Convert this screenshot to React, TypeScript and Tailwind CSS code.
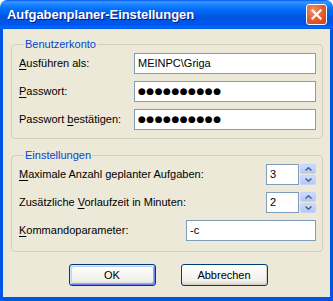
import React from "react";

const font = "font-['Liberation_Sans',Tahoma,sans-serif]";

const U = ({ children }: { children: React.ReactNode }) => (
  <span className="underline underline-offset-[2px]">{children}</span>
);

const TextBox = ({ value, className = "" }: { value: React.ReactNode; className?: string }) => (
  <div
    className={`h-[21px] border border-[#7f9db9] bg-white flex items-center pl-[3px] text-[11px] text-black ${className}`}
  >
    {value}
  </div>
);

const Dots = () => (
  <span className="font-['DejaVu_Sans',sans-serif] text-[9px] tracking-[0.5px] leading-none">
    ●●●●●●●●●●
  </span>
);

const Spin = ({ value }: { value: string }) => (
  <div className="flex items-center gap-[1px]">
    <TextBox value={value} className="w-[33px]" />
    <div className="flex flex-col gap-[1px] w-[16px] h-[21px]">
      {["up", "down"].map((d) => (
        <div
          key={d}
          className="flex-1 rounded-[2px] bg-[linear-gradient(to_bottom,#cddcfc,#b4c8f6)] border border-[#c3d3fd] flex items-center justify-center"
        >
          <svg width="7" height="4" viewBox="0 0 7 4">
            {d === "up" ? (
              <path d="M0.5 3.5 L3.5 0.8 L6.5 3.5" fill="none" stroke="#4d6185" strokeWidth="1.5" />
            ) : (
              <path d="M0.5 0.5 L3.5 3.2 L6.5 0.5" fill="none" stroke="#4d6185" strokeWidth="1.5" />
            )}
          </svg>
        </div>
      ))}
    </div>
  </div>
);

const Group = ({ title, children, className = "" }: { title: string; children: React.ReactNode; className?: string }) => (
  <fieldset className={`border border-[#d0d0bf] rounded-[4px] pl-[7px] pr-[6px] ${className}`}>
    <legend className="ml-[5px] px-[1px] text-[11px] leading-[13px] text-[#0046d5]">{title}</legend>
    {children}
  </fieldset>
);

const Button = ({ label, isDefault }: { label: string; isDefault?: boolean }) => (
  <button
    className={`w-[87px] h-[22px] rounded-[3px] border border-[#003c74] text-[11px] text-black bg-[linear-gradient(to_bottom,#ffffff,#f0f0ea_80%,#d6d0c5)] ${
      isDefault ? "shadow-[inset_1px_1px_0_#cee7ff,inset_-1px_-1px_0_#6982ee,inset_2px_2px_0_#bcd4f6,inset_-2px_-2px_0_#89adf4]" : "shadow-[inset_-1px_-1px_0_#d6d0c5]"
    }`}
  >
    {label}
  </button>
);

export default function App() {
  return (
    <div className={`w-[333px] h-[301px] flex flex-col bg-white ${font}`}>
      {/* Title bar */}
      <div className="h-[29px] rounded-t-[7px] flex items-center justify-between pl-[7px] pr-[6px] bg-[linear-gradient(to_bottom,#0058ee_0%,#3a93ff_6%,#288eff_12%,#127dff_20%,#036ffc_32%,#0262ee_44%,#0057e5_56%,#0054e3_68%,#0055eb_80%,#005bf5_88%,#026afe_94%,#0062ef_97%,#0052d6_100%)]">
        <span className="text-white font-bold text-[13px] tracking-[-0.05px] [text-shadow:1px_1px_#0a1883]">
          Aufgabenplaner-Einstellungen
        </span>
        <div className="w-[21px] h-[21px] rounded-[3px] border border-white bg-[radial-gradient(circle_at_35%_30%,#f0906d,#e25a2d_55%,#c8401a)] flex items-center justify-center">
          <svg width="11" height="11" viewBox="0 0 11 11">
            <path d="M1.5 1.5 L9.5 9.5 M9.5 1.5 L1.5 9.5" stroke="white" strokeWidth="2.2" strokeLinecap="square" />
          </svg>
        </div>
      </div>

      {/* Frame */}
      <div className="flex-1 flex bg-[#0055e5] pl-[3px] pr-[3px] pb-[4px]">
        <div className="flex-1 bg-[#ece9d8] flex flex-col pl-[8px] pr-[7px] text-[11px] text-black">
          <Group title="Benutzerkonto" className="mt-[9px] pt-[2px] pb-[8px]">
            <div className="flex flex-col gap-[7px]">
              <div className="flex items-center justify-between">
                <span><U>A</U>usführen als:</span>
                <TextBox value="MEINPC\Griga" className="w-[182px]" />
              </div>
              <div className="flex items-center justify-between">
                <span><U>P</U>asswort:</span>
                <TextBox value={<Dots />} className="w-[182px]" />
              </div>
              <div className="flex items-center justify-between">
                <span>Passwort <U>b</U>estätigen:</span>
                <TextBox value={<Dots />} className="w-[182px]" />
              </div>
            </div>
          </Group>

          <Group title="Einstellungen" className="mt-[10px] pt-[2px] pb-[10px]">
            <div className="flex flex-col gap-[7px]">
              <div className="flex items-center justify-between">
                <span><U>M</U>aximale Anzahl geplanter Aufgaben:</span>
                <Spin value="3" />
              </div>
              <div className="flex items-center justify-between">
                <span>Zusätzliche <U>V</U>orlaufzeit in Minuten:</span>
                <Spin value="2" />
              </div>
              <div className="flex items-center justify-between">
                <span><U>K</U>ommandoparameter:</span>
                <TextBox value="-c" className="w-[130px]" />
              </div>
            </div>
          </Group>

          <div className="flex justify-center gap-[25px] mt-[12px] pl-[2px]">
            <Button label="OK" isDefault />
            <Button label="Abbrechen" />
          </div>
        </div>
      </div>
    </div>
  );
}
